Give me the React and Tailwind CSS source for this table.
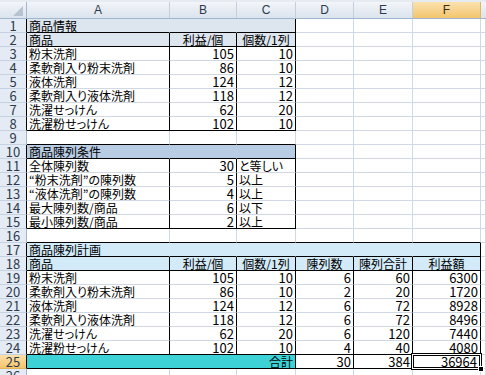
import clsx from "clsx";

// ---- colours / fills ----
const FILLS = {
  w: { bg: "bg-white", r: "border-r-[#d0d7e5]", b: "border-b-[#d0d7e5]" },
  info: { bg: "bg-[#dde5ef]", r: "border-r-[#dde5ef]", b: "border-b-[#dde5ef]" },
  cond: { bg: "bg-[#b8cce4]", r: "border-r-[#b8cce4]", b: "border-b-[#b8cce4]" },
  plan: { bg: "bg-[#d3ebf9]", r: "border-r-[#d3ebf9]", b: "border-b-[#d3ebf9]" },
  sum: { bg: "bg-[#3cd2d6]", r: "border-r-[#3cd2d6]", b: "border-b-[#3cd2d6]" },
};

const WIDTHS = ["w-[143px]", "w-[67px]", "w-[59px]", "w-[58px]", "w-[59px]", "w-[68px]"];
const LETTERS = ["A", "B", "C", "D", "E", "F"];

const products = [
  ["粉末洗剤", "105", "10"],
  ["柔軟剤入り粉末洗剤", "86", "10"],
  ["液体洗剤", "124", "12"],
  ["柔軟剤入り液体洗剤", "118", "12"],
  ["洗濯せっけん", "62", "20"],
  ["洗濯粉せっけん", "102", "10"],
];

const plan = [
  ["6", "60", "6300"],
  ["2", "20", "1720"],
  ["6", "72", "8928"],
  ["6", "72", "8496"],
  ["6", "120", "7440"],
  ["4", "40", "4080"],
];

const conditions = [
  ["全体陳列数", "30", "と等しい"],
  ["“粉末洗剤”の陳列数", "5", "以上"],
  ["“液体洗剤”の陳列数", "4", "以上"],
  ["最大陳列数/商品", "6", "以下"],
  ["最小陳列数/商品", "2", "以上"],
];

// ---- sheet rows ----
const ROWS = [];
ROWS.push({
  n: 1,
  edge: true,
  cells: [
    { f: "info", t: "商品情報", b: 1 },
    { f: "info", b: 1 },
    { f: "info", r: 1, b: 1 },
  ],
});
ROWS.push({
  n: 2,
  edge: true,
  cells: [
    { f: "info", t: "商品", r: 1, b: 1 },
    { f: "info", t: "利益/個", r: 1, b: 1, a: "c" },
    { f: "info", t: "個数/1列", r: 1, b: 1, a: "c" },
  ],
});
products.forEach(([name, p, q], i) => {
  const last = i === products.length - 1 ? 1 : 0;
  ROWS.push({
    n: 3 + i,
    edge: true,
    cells: [
      { t: name, r: 1, b: last },
      { t: p, r: 1, b: last, a: "r", num: 1 },
      { t: q, r: 1, b: last, a: "r", num: 1 },
    ],
  });
});
ROWS.push({ n: 9, cells: [{ b: 1 }, { b: 1 }, { b: 1 }] });
ROWS.push({
  n: 10,
  edge: true,
  cells: [
    { f: "cond", t: "商品陳列条件", b: 1 },
    { f: "cond", b: 1 },
    { f: "cond", r: 1, b: 1 },
  ],
});
conditions.forEach(([name, v, op], i) => {
  const last = i === conditions.length - 1 ? 1 : 0;
  ROWS.push({
    n: 11 + i,
    edge: true,
    cells: [
      { t: name, r: 1, b: last },
      { t: v, r: 1, b: last, a: "r", num: 1 },
      { t: op, r: 1, b: last },
    ],
  });
});
ROWS.push({ n: 16, cells: [{ b: 1 }, { b: 1 }, { b: 1 }, { b: 1 }, { b: 1 }, { b: 1 }] });
ROWS.push({
  n: 17,
  edge: true,
  cells: [
    { f: "plan", t: "商品陳列計画", b: 1 },
    { f: "plan", b: 1 },
    { f: "plan", b: 1 },
    { f: "plan", b: 1 },
    { f: "plan", b: 1 },
    { f: "plan", r: 1, b: 1 },
  ],
});
ROWS.push({
  n: 18,
  edge: true,
  cells: [
    { f: "plan", t: "商品", r: 1, b: 1 },
    { f: "plan", t: "利益/個", r: 1, b: 1, a: "c" },
    { f: "plan", t: "個数/1列", r: 1, b: 1, a: "c" },
    { f: "plan", t: "陳列数", r: 1, b: 1, a: "c" },
    { f: "plan", t: "陳列合計", r: 1, b: 1, a: "c" },
    { f: "plan", t: "利益額", r: 1, b: 1, a: "c" },
  ],
});
products.forEach(([name, p, q], i) => {
  const last = i === products.length - 1 ? 1 : 0;
  ROWS.push({
    n: 19 + i,
    edge: true,
    cells: [
      { t: name, r: 1, b: last },
      { t: p, r: 1, b: last, a: "r", num: 1 },
      { t: q, r: 1, b: last, a: "r", num: 1 },
      ...plan[i].map((v) => ({ t: v, r: 1, b: last, a: "r", num: 1 })),
    ],
  });
});

function Cell({ c = {}, w }) {
  const fill = FILLS[c.f || "w"];
  return (
    <div
      className={clsx(
        "h-full shrink-0 border-r border-b px-[2px] whitespace-nowrap leading-[13px]",
        w,
        fill.bg,
        c.r ? "border-r-black" : fill.r,
        c.b ? "border-b-black" : fill.b,
        c.a === "r" && "text-right",
        c.a === "c" && "text-center",
        c.num ? "text-[13px]" : "text-[12px]"
      )}
    >
      {c.t}
    </div>
  );
}

function RowHead({ n, edge, selected }) {
  return (
    <div
      className={clsx(
        "w-[27px] h-full shrink-0 border-r border-b text-center text-[13px] leading-[13px] text-[#2d3a4b]",
        edge ? "border-r-black" : "border-r-[#9eb6ce]",
        selected
          ? "bg-linear-to-b from-[#fbe0a8] to-[#f4c46a] border-b-[#e0b25a]"
          : "bg-[#e4ebf5] border-b-[#c5d2e1]"
      )}
    >
      {n}
    </div>
  );
}

function SheetRow({ row }) {
  return (
    <div className="flex h-[14px]">
      <RowHead n={row.n} edge={row.edge} />
      {WIDTHS.map((w, i) => (
        <Cell key={i} w={w} c={row.cells[i]} />
      ))}
      <Cell w="flex-1" />
    </div>
  );
}

export default function App() {
  return (
    <div className="w-[486px] h-[375px] overflow-hidden bg-white text-black [font-feature-settings:'palt'] font-['Liberation_Sans_Narrow','Noto_Sans_CJK_JP',sans-serif]">
      {/* column headers */}
      <div className="flex h-[19px] border-t-2 border-t-[#e6ebf1] border-b border-b-[#9eb6ce]">
        <div className="w-[27px] shrink-0 border-r border-r-[#9eb6ce] bg-linear-to-b from-[#f2f5f9] to-[#dbe3ed] relative">
          <svg className="absolute right-[3px] bottom-[2px]" width="10" height="10" viewBox="0 0 10 10">
            <polygon points="10,0 10,10 0,10" fill="#b7c3d1" />
          </svg>
        </div>
        {LETTERS.map((l, i) => (
          <div
            key={l}
            className={clsx(
              "shrink-0 border-r flex items-center justify-center text-[12px] font-['Liberation_Sans',sans-serif]",
              WIDTHS[i],
              l === "F"
                ? "bg-linear-to-b from-[#fbe2ae] to-[#f3c46c] border-r-[#e3b865] text-[#3b2e14]"
                : "bg-linear-to-b from-[#f2f5f9] to-[#dbe3ed] border-r-[#c3cfdd] text-[#2d3a4b]"
            )}
          >
            {l}
          </div>
        ))}
        <div className="flex-1 bg-linear-to-b from-[#f2f5f9] to-[#dbe3ed]" />
      </div>

      {ROWS.map((row) => (
        <SheetRow key={row.n} row={row} />
      ))}

      {/* total row */}
      <div className="flex h-[14px]">
        <RowHead n={25} edge selected />
        <div className="w-[269px] shrink-0 h-full border-r border-b border-r-black border-b-black bg-[#3cd2d6] px-[2px] text-right text-[12px] leading-[13px]">
          合計
        </div>
        <Cell w="w-[58px]" c={{ t: "30", r: 1, b: 1, a: "r", num: 1 }} />
        <Cell w="w-[59px]" c={{ t: "384", r: 1, b: 1, a: "r", num: 1 }} />
        <div className="relative w-[68px] shrink-0 h-full border-r border-b border-r-black border-b-black bg-white px-[3px] text-right text-[13px] leading-[13px] z-10">
          36964
          <div className="absolute -left-[2px] -top-[2px] -right-[2px] -bottom-[2px] pointer-events-none shadow-[inset_0_0_0_1px_#000,inset_0_0_0_2px_#fff,inset_0_0_0_3px_#000]" />
          <div className="absolute -right-[4px] -bottom-[4px] w-[6px] h-[6px] bg-black border border-white" />
        </div>
        <Cell w="flex-1" />
      </div>

      <SheetRow row={{ n: 26, cells: [] }} />
    </div>
  );
}
